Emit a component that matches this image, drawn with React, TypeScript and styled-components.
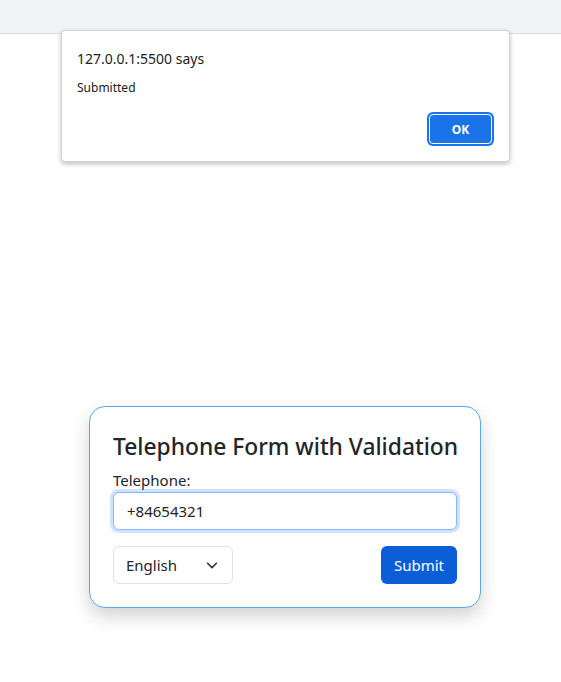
import React from "react";
import styled, { createGlobalStyle } from "styled-components";

const Global = createGlobalStyle`
  html, body { margin: 0; padding: 0; background: #fff; }
  body { font-family: "Noto Sans", "Open Sans", sans-serif; }
  * { box-sizing: border-box; }
`;

const Page = styled.div`
  position: relative;
  width: 561px;
  height: 682px;
  overflow: hidden;
  display: flex;
  flex-direction: column;
`;

const TopBar = styled.div`
  height: 34px;
  flex: none;
  background: #f1f3f4;
  border-bottom: 1px solid #dadce0;
`;

const Content = styled.main`
  flex: 1;
  display: flex;
  justify-content: flex-start;
  padding: 372px 0 0 89px;
`;

const Card = styled.form`
  width: 392px;
  height: 202px;
  border: 1px solid #5aa9ee;
  border-radius: 16px;
  padding: 25px 23px 23px 23px;
  background: #fff;
  box-shadow: 0 8px 18px rgba(0, 0, 0, 0.18);
  display: flex;
  flex-direction: column;
`;

const Title = styled.h2`
  margin: 0 0 7px 0;
  font-size: 22.8px;
  font-weight: 500;
  line-height: 30px;
  color: #212529;
  white-space: nowrap;
`;

const Label = styled.label`
  font-size: 15px;
  line-height: 22px;
  color: #212529;
  margin-bottom: 1px;
`;

const Input = styled.input`
  width: 344px;
  height: 38px;
  border: 1px solid #86b7fe;
  border-radius: 6px;
  padding: 0 13px;
  font-family: inherit;
  font-size: 15px;
  color: #212529;
  outline: none;
  box-shadow: 0 0 0 3px rgba(13, 110, 253, 0.2);
`;

const Row = styled.div`
  margin-top: 16px;
  display: flex;
  justify-content: space-between;
  align-items: center;
  width: 344px;
`;

const SelectBox = styled.div`
  width: 120px;
  height: 38px;
  border: 1px solid #dee2e6;
  border-radius: 6px;
  display: flex;
  align-items: center;
  justify-content: space-between;
  padding: 0 13px 0 12px;
  font-size: 15px;
  color: #212529;
`;

const SubmitButton = styled.button`
  width: 76px;
  height: 38px;
  border: none;
  border-radius: 6px;
  background: #0b5ed7;
  color: #fff;
  font-family: inherit;
  font-size: 15px;
  padding: 0;
`;

const Dialog = styled.div`
  position: absolute;
  left: 61px;
  top: 30px;
  width: 449px;
  height: 132px;
  background: #fff;
  border: 1px solid #d4d4d4;
  border-radius: 4px;
  box-shadow: 0 2px 5px rgba(0, 0, 0, 0.25);
  padding: 18px 17px 16px 15px;
  display: flex;
  flex-direction: column;
  font-family: "Noto Sans", "Open Sans", sans-serif;
`;

const DialogTitle = styled.div`
  font-size: 14px;
  line-height: 20px;
  color: #202124;
`;

const DialogMsg = styled.div`
  margin-top: 11px;
  font-size: 12px;
  line-height: 16px;
  color: #202124;
`;

const DialogActions = styled.div`
  margin-top: auto;
  display: flex;
  justify-content: flex-end;
`;

const OkButton = styled.button`
  width: 63px;
  height: 30px;
  border-radius: 4px;
  background: #1a73e8;
  color: #fff;
  font-family: inherit;
  font-weight: 700;
  font-size: 12px;
  border: 1px solid #fff;
  box-shadow: 0 0 0 2px #1a73e8;
  margin-right: 0;
  margin-bottom: 1px;
  padding: 0;
`;

export default function App() {
  return (
    <Page>
      <Global />
      <TopBar />
      <Content>
        <Card onSubmit={(e) => e.preventDefault()}>
          <Title>Telephone Form with Validation</Title>
          <Label htmlFor="tel">Telephone:</Label>
          <Input id="tel" defaultValue="+84654321" />
          <Row>
            <SelectBox>
              <span>English</span>
              <svg width="14" height="14" viewBox="0 0 16 16" fill="none">
                <path d="M3 6l5 5 5-5" stroke="#343a40" strokeWidth="2" strokeLinecap="round" strokeLinejoin="round" />
              </svg>
            </SelectBox>
            <SubmitButton type="submit">Submit</SubmitButton>
          </Row>
        </Card>
      </Content>
      <Dialog role="alertdialog">
        <DialogTitle>127.0.0.1:5500 says</DialogTitle>
        <DialogMsg>Submitted</DialogMsg>
        <DialogActions>
          <OkButton>OK</OkButton>
        </DialogActions>
      </Dialog>
    </Page>
  );
}
